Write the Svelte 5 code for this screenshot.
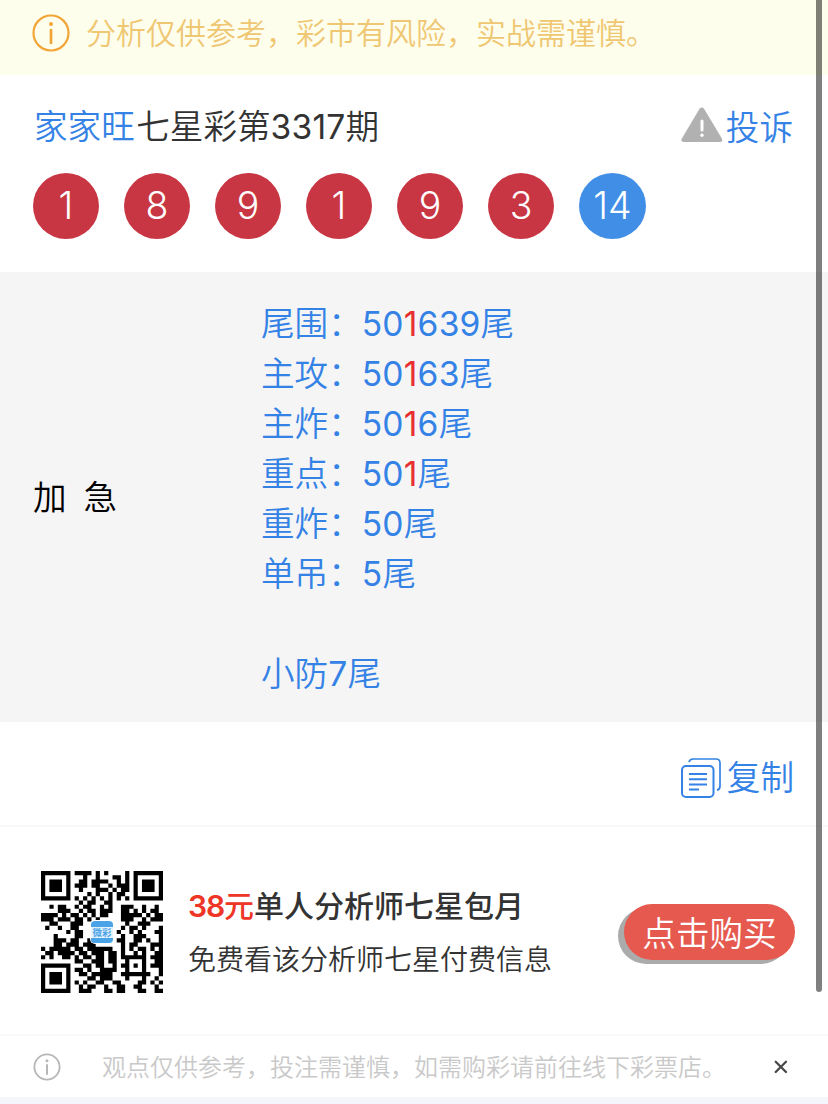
<script>
  const balls = ['1', '8', '9', '1', '9', '3', '14'];
  const lines = [
    ['尾围：', '50', '1', '639', '尾'],
    ['主攻：', '50', '1', '63', '尾'],
    ['主炸：', '50', '1', '6', '尾'],
    ['重点：', '50', '1', '', '尾'],
    ['重炸：', '50', '', '', '尾'],
    ['单吊：', '5', '', '', '尾'],
    ['', '', '', '', ''],
    ['小防', '7', '', '', '尾']
  ];
  const qr = [
    '11111110111101010000101111111',
    '10000010001001000110101000001',
    '10111010011011110010101011101',
    '10111010111011001011101011101',
    '10111010010001110101101011101',
    '10000010000101001011001000001',
    '11111110101010101010101111111',
    '00000000010110011000000000000',
    '00101100101100101001110010010',
    '00001110010110111001101010110',
    '11110101101010110001111101011',
    '11101110110101000001110010111',
    '00110001110000000000100111000',
    '01001001100000000001011010001',
    '00000010110000000010010100011',
    '00010000110000000001001110001',
    '00011101100100000011001101001',
    '00011011101110000001011000111',
    '10111110110111111001010110101',
    '01101111011011101101001010011',
    '10100110101101101101111110111',
    '00000000110011101100100010011',
    '11111110001101100101101010111',
    '10000010110100111100100010001',
    '10111010011011111001111111001',
    '10111010000110111000100010010',
    '10111010101001100110000110101',
    '10000010010110010011001100010',
    '11111110011100011011000110011'
  ];
  const qrPath = qr
    .map((row, y) => [...row].map((c, x) => (c === '1' ? `M${x} ${y}h1v1h-1z` : '')).join(''))
    .join('');
</script>

<main>
  <section class="notice">
    <svg width="38" height="38" viewBox="0 0 38 38" fill="none">
      <circle cx="19" cy="19" r="17.5" stroke="#f2a537" stroke-width="2.2" />
      <circle cx="19" cy="10" r="2" fill="#f2a537" />
      <path d="M19 16v13" stroke="#f2a537" stroke-width="2.7" stroke-linecap="round" />
    </svg>
    <span>分析仅供参考，彩市有风险，实战需谨慎。</span>
  </section>

  <section class="head">
    <div class="title">
      <div><span class="blue">家家旺</span>七星彩第<span class="num">3317</span>期</div>
      <div class="action">
        <svg width="42" height="36" viewBox="0 0 42 36">
          <path d="M18.4 2Q20.8-.8 23.2 2L40.7 31.2Q42.4 35 38.5 35H3Q-.8 35 1 31.2Z" fill="#b1b1b1" />
          <path d="M21 14v9" stroke="#fff" stroke-width="3" stroke-linecap="round" />
          <circle cx="21" cy="28.3" r="1.7" fill="#fff" />
        </svg>
        <span>投诉</span>
      </div>
    </div>
    <div class="balls">
      {#each balls as b, i}
        <b class:last={i === 6}>{b}</b>
      {/each}
    </div>
  </section>

  <section class="body">
    <div class="label"><span>加</span><span>急</span></div>
    <div class="lines">
      {#each lines as l}
        <p>{l[0]}<span class="num">{l[1]}<em>{l[2]}</em>{l[3]}</span>{l[4]}</p>
      {/each}
    </div>
  </section>

  <section class="copy">
    <svg width="42" height="42" viewBox="0 0 42 42" fill="none" stroke="#3482e6" stroke-width="2">
      <rect x="2" y="9" width="31.5" height="31" rx="4" />
      <path d="M9 5.2Q9.6 2 13 2H36Q40 2 40 6V29Q40 32.6 37 33.2" stroke-width="1.7" />
      <path d="M9 17h18M9 22.2h18M9 27.4h18M9 32.6h10" />
    </svg>
    <span>复制</span>
  </section>

  <section class="promo">
    <div class="qr">
      <svg width="122" height="122" viewBox="0 0 29 29"><path d={qrPath} /></svg>
      <div class="mark"><span>微彩</span></div>
    </div>
    <div class="text">
      <strong><i><span class="num">38</span>元</i>单人分析师七星包月</strong>
      <p>免费看该分析师七星付费信息</p>
    </div>
    <button>点击购买</button>
  </section>

  <footer>
    <svg width="28" height="28" viewBox="0 0 28 28" fill="none">
      <circle cx="14" cy="14" r="12.6" stroke="#b7b7b7" stroke-width="1.8" />
      <circle cx="14" cy="7.8" r="1.5" fill="#b7b7b7" />
      <path d="M14 12v9" stroke="#b7b7b7" stroke-width="2" stroke-linecap="round" />
    </svg>
    <span>观点仅供参考，投注需谨慎，如需购彩请前往线下彩票店。</span>
    <svg class="close" width="14" height="14" viewBox="0 0 14 14" fill="none">
      <path d="M1.7 1.7L12 12M12 1.7L1.7 12" stroke="#484848" stroke-width="2.3" stroke-linecap="round" />
    </svg>
  </footer>
  <div class="scroll"></div>
</main>

<style>
  :global(body) { margin: 0; background: #f5f6fb; }
  main {
    position: relative;
    width: 828px;
    height: 1104px;
    overflow: hidden;
    box-sizing: border-box;
    font-family: "Noto Sans CJK SC", sans-serif;
    font-weight: 350;
    font-size: 33.6px;
    color: #333;
  }
  section, footer { box-sizing: border-box; background: #fff; white-space: nowrap; }
  svg { display: block; flex: none; }
  p { margin: 0; }
  .num { font-family: Inter, sans-serif; font-weight: 400; letter-spacing: 0.2px; }
  .blue { color: #3482e6; margin-right: 1.5px; }
  .notice {
    height: 75px;
    padding: 0 32px 9px;
    display: flex;
    align-items: center;
    gap: 17px;
    background: #fefeec;
    color: #efc773;
    font-size: 30px;
  }
  .notice svg { margin-right: -1px; }
  .notice span { margin-top: -4px; }
  .head { height: 197px; padding: 26px 35px 0 33px; }
  .title { display: flex; justify-content: space-between; align-items: center; height: 50px; line-height: 50px; padding-left: 1px; }
  .action { display: flex; align-items: center; gap: 3px; color: #3482e6; }
  .action svg { margin-top: -3px; }
  .balls { display: flex; gap: 25px; margin-top: 22px; }
  .balls b {
    width: 66px;
    height: 66px;
    border-radius: 50%;
    background: #c83643;
    color: #fff;
    text-align: center;
    font: 350 37.5px/66px Inter, sans-serif;
  }
  .balls .last { width: 67px; background: #418ee6; }
  .body { display: flex; height: 450px; background: #f5f5f5; align-items: center; padding-left: 33px; }
  .label { display: flex; gap: 17px; width: 228px; margin-top: -3px; color: #000; }
  .lines { color: #3482e6; }
  .lines p { height: 50px; line-height: 50px; }
  .lines em { font-style: normal; color: #e72f32; }
  .copy {
    height: 105px;
    border-bottom: 2px solid #f9f9f9;
    display: flex;
    justify-content: flex-end;
    align-items: center;
    gap: 5px;
    padding: 9px 34px 0 0;
    color: #3482e6;
  }
  .copy span { margin-top: -5px; }
  .promo { height: 209px; display: flex; align-items: center; padding: 3px 33px 0 41px; border-bottom: 2px solid #fafafa; }
  .qr { position: relative; width: 122px; height: 122px; }
  .mark {
    position: absolute;
    left: 50px;
    top: 50px;
    width: 22px;
    height: 22px;
    box-sizing: border-box;
    border-radius: 4px;
    background: linear-gradient(#4aa3e7 6px, #e5f3fc 6px 17px, #4aa3e7 17px);
    box-shadow: 0 0 0 1px #fff;
    display: flex;
    align-items: center;
    justify-content: center;
    color: #4aa3e7;
    font: 700 9.5px/10px "Noto Sans CJK SC", sans-serif;
  }
  .text { margin: -1px 0 0 25px; flex: 1; }
  .text strong { display: block; font-weight: 500; font-size: 30px; line-height: 51px; }
  .text i { font-style: normal; color: #ee3526; }
  .text .num { letter-spacing: -1.2px; font-weight: 600; }
  .text p { font-size: 28px; line-height: 52px; }
  button {
    width: 171px;
    height: 56px;
    padding: 0;
    border: 0;
    border-radius: 28px;
    background: #e6594f;
    box-shadow: -6px 4px 0 #ababab;
    color: #fff;
    font: inherit;
    line-height: 54px;
  }
  footer { display: flex; align-items: center; height: 61px; padding: 0 40px 0 33px; font-size: 24px; color: #c9c9c9; }
  footer span { margin: -2px 0 0 41px; }
  .close { margin-left: auto; }
  .scroll { position: absolute; left: 816px; top: -10px; width: 6px; height: 1002px; border-radius: 3px; background: rgba(0, 0, 0, 0.5); }
</style>
